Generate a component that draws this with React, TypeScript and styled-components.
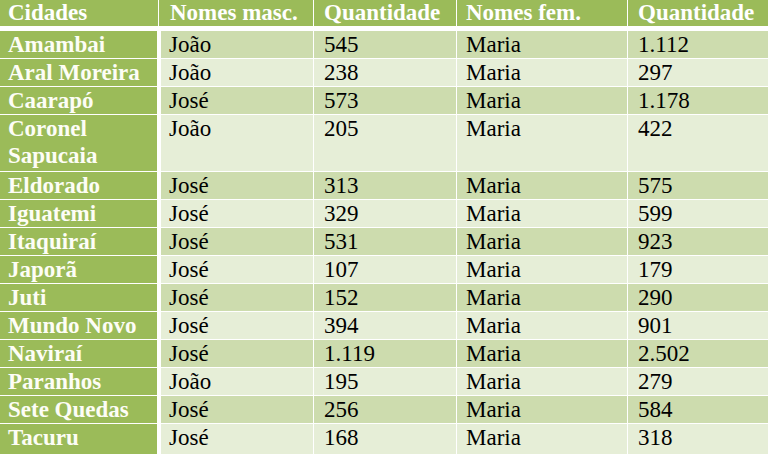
import React from 'react';
import styled, { createGlobalStyle } from 'styled-components';

const GlobalStyle = createGlobalStyle`
  html, body {
    margin: 0;
    padding: 0;
    background: #fff;
  }
`;

const GREEN = '#9bbb59';
const BAND_DARK = '#cddcae';
const BAND_LIGHT = '#e6eed7';

const Sheet = styled.div`
  display: flex;
  flex-direction: column;
  width: 768px;
  height: 454px;
  overflow: hidden;
  background: #fff;
  font-family: 'Liberation Serif', 'Times New Roman', serif;
  font-size: 23px;
`;

const HeadRow = styled.div`
  display: flex;
  flex-shrink: 0;
  height: 26px;
  border-bottom: 5px solid #fff;
`;

interface IRow {
  $dark: boolean;
  $tall?: boolean;
}
const Row = styled.div<IRow>`
  display: flex;
  flex-shrink: 0;
  min-height: ${({ $tall }) => ($tall ? '56px' : '27px')};
  border-bottom: 1px solid #fff;
  background: ${({ $dark }) => ($dark ? BAND_DARK : BAND_LIGHT)};
  &:last-child {
    flex-grow: 1;
    border-bottom: 0;
  }
`;

interface ICell {
  $w: number;
  $pad: number;
  $border?: number;
}
const HeadCell = styled.div<ICell>`
  box-sizing: border-box;
  width: ${({ $w }) => $w}px;
  flex-shrink: 0;
  padding-left: ${({ $pad }) => $pad}px;
  border-left: ${({ $border }) => $border || 0}px solid #fff;
  background: ${GREEN};
  color: #fff;
  font-weight: bold;
  line-height: 26px;
  white-space: nowrap;
`;

const CityCell = styled.div<ICell>`
  box-sizing: border-box;
  width: ${({ $w }) => $w}px;
  flex-shrink: 0;
  padding-left: ${({ $pad }) => $pad}px;
  background: ${GREEN};
  color: #fdfdf6;
  font-weight: bold;
  line-height: 27px;
`;

const DataCell = styled.div<ICell>`
  box-sizing: border-box;
  width: ${({ $w }) => $w}px;
  flex-shrink: 0;
  padding-left: ${({ $pad }) => $pad}px;
  border-left: ${({ $border }) => $border || 1}px solid #fff;
  color: #000;
  line-height: 27px;
  white-space: nowrap;
`;

const rows = [
  ['Amambai', 'João', '545', 'Maria', '1.112'],
  ['Aral Moreira', 'João', '238', 'Maria', '297'],
  ['Caarapó', 'José', '573', 'Maria', '1.178'],
  ['Coronel Sapucaia', 'João', '205', 'Maria', '422'],
  ['Eldorado', 'José', '313', 'Maria', '575'],
  ['Iguatemi', 'José', '329', 'Maria', '599'],
  ['Itaquiraí', 'José', '531', 'Maria', '923'],
  ['Japorã', 'José', '107', 'Maria', '179'],
  ['Juti', 'José', '152', 'Maria', '290'],
  ['Mundo Novo', 'José', '394', 'Maria', '901'],
  ['Naviraí', 'José', '1.119', 'Maria', '2.502'],
  ['Paranhos', 'João', '195', 'Maria', '279'],
  ['Sete Quedas', 'José', '256', 'Maria', '584'],
  ['Tacuru', 'José', '168', 'Maria', '318'],
];

const App = () => {
  return (
    <Sheet>
      <GlobalStyle />
      <HeadRow>
        <HeadCell $w={158} $pad={8}>
          Cidades
        </HeadCell>
        <HeadCell $w={155} $pad={11} $border={1}>
          Nomes masc.
        </HeadCell>
        <HeadCell $w={143} $pad={10} $border={1}>
          Quantidade
        </HeadCell>
        <HeadCell $w={171} $pad={9} $border={1}>
          Nomes fem.
        </HeadCell>
        <HeadCell $w={141} $pad={10} $border={1}>
          Quantidade
        </HeadCell>
      </HeadRow>
      {rows.map((row, idx) => {
        const tall = row[0] === 'Coronel Sapucaia';
        return (
          <Row key={row[0]} $dark={idx % 2 === 0} $tall={tall}>
            <CityCell $w={157} $pad={8}>
              {tall ? (
                <>
                  Coronel
                  <br />
                  Sapucaia
                </>
              ) : (
                row[0]
              )}
            </CityCell>
            <DataCell $w={156} $pad={8} $border={4}>
              {row[1]}
            </DataCell>
            <DataCell $w={143} $pad={10}>
              {row[2]}
            </DataCell>
            <DataCell $w={171} $pad={9}>
              {row[3]}
            </DataCell>
            <DataCell $w={141} $pad={10}>
              {row[4]}
            </DataCell>
          </Row>
        );
      })}
    </Sheet>
  );
};

export default App;
